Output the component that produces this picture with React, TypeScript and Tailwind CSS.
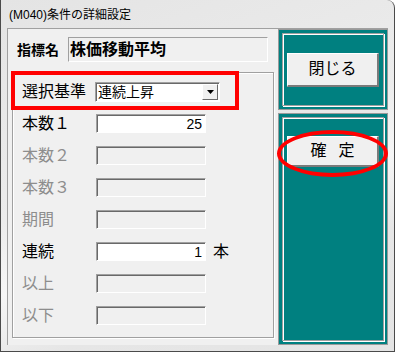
import React from "react";

const FONT = "font-['Liberation_Sans','Noto_Sans_CJK_JP',sans-serif]";

function Field({ value, enabled }: { value?: string; enabled?: boolean }) {
  return (
    <div
      className={`w-[110px] h-[19px] border-t border-l border-[#a0a0a0] border-b border-r border-b-white border-r-white shadow-[inset_1px_1px_0_#696969] flex items-center justify-end pr-[3px] text-[14px] leading-none text-black ${
        enabled ? "bg-white" : "bg-[#f0f0f0]"
      }`}
    >
      {value}
    </div>
  );
}

function Row({
  label,
  enabled,
  value,
  suffix,
}: {
  label: string;
  enabled?: boolean;
  value?: string;
  suffix?: string;
}) {
  return (
    <div className="flex items-center h-[19px]">
      <div
        className={`w-[83px] pl-[9px] text-[16px] leading-none whitespace-nowrap ${
          enabled ? "text-black" : "text-[#8d8d8d]"
        }`}
      >
        {label}
      </div>
      <Field value={value} enabled={enabled} />
      {suffix && <div className="ml-[7px] text-[16px] leading-none text-black">{suffix}</div>}
    </div>
  );
}

function Btn({ children, h }: { children: React.ReactNode; h: string }) {
  return (
    <div
      className={`w-[92px] ${h} bg-[#f0f0f0] border-t border-l border-white border-b-2 border-r-2 border-b-[#7a7a7a] border-r-[#7a7a7a] flex items-center justify-center text-[16px] leading-none text-black`}
    >
      {children}
    </div>
  );
}

export default function App() {
  return (
    <div
      className={`${FONT} relative w-[395px] h-[352px] overflow-hidden bg-[linear-gradient(160deg,#e4e4e4_0%,#ececec_45%,#f6f6f6_60%,#e6e6e6_75%,#e4e4e4_100%)] border-l border-r border-b border-[#4a4a4a] rounded-tr-[8px]`}
    >
      <div className="h-[28px] pl-[8px] pt-[1px] flex items-center text-[12px] text-black leading-none">
        (M040)条件の詳細設定
      </div>
      <div className="ml-[6px] w-[381px] h-[317px] bg-[#f0f0f0] border-t border-l border-[#a0a0a0] flex">
        {/* left column */}
        <div className="w-[270px] flex flex-col">
          <div className="mt-[8px] h-[25px] flex items-center">
            <div className="w-[60px] pl-[9px] text-[14px] font-bold leading-none text-black whitespace-nowrap">
              指標名
            </div>
            <div className="w-[200px] h-[25px] border-t border-l border-[#a0a0a0] border-b border-r border-b-white border-r-white flex items-center pl-[1px] text-[16px] font-bold leading-none text-black">
              株価移動平均
            </div>
          </div>
          <div className="ml-[4px] mt-[10px] w-[262px] h-[266px] border border-[#a0a0a0] shadow-[inset_1px_1px_0_#fff,1px_1px_0_#fff] flex flex-col pt-[9px] gap-[13px]">
            <div className="flex items-center h-[20px] mb-[-1px]">
              <div className="w-[82px] pl-[9px] text-[16px] leading-none text-black whitespace-nowrap">
                選択基準
              </div>
              <div className="w-[125px] h-[20px] bg-white border-t border-l border-[#a0a0a0] border-b border-r border-b-white border-r-white shadow-[inset_1px_1px_0_#696969] flex items-center">
                <div className="flex-1 pl-[2px] text-[14px] leading-none text-black">連続上昇</div>
                <div className="w-[16px] h-[16px] mr-[1px] bg-[#f0f0f0] border-t border-l border-white border-b border-r border-b-[#696969] border-r-[#696969] flex items-center justify-center">
                  <svg width="7" height="4" viewBox="0 0 7 4">
                    <path d="M0 0H7L3.5 4Z" fill="#000" />
                  </svg>
                </div>
              </div>
            </div>
            <Row label="本数１" enabled value="25" />
            <Row label="本数２" />
            <Row label="本数３" />
            <Row label="期間" />
            <Row label="連続" enabled value="1" suffix="本" />
            <Row label="以上" />
            <Row label="以下" />
          </div>
        </div>
        {/* right column */}
        <div className="w-[110px] flex flex-col">
          <div className="h-[81px] bg-[#008080] border border-[#9a9a9a] p-[3px]">
            <div className="h-full border border-[#a0a0a0] shadow-[inset_1px_1px_0_#fff,1px_1px_0_#fff] flex items-center justify-center">
              <Btn h="h-[34px]">閉じる</Btn>
            </div>
          </div>
          <div className="h-[3px] bg-[#e8e8e8]" />
          <div className="flex-1 bg-[#008080] border border-[#9a9a9a] p-[3px]">
            <div className="h-full border border-[#a0a0a0] shadow-[inset_1px_1px_0_#fff,1px_1px_0_#fff] flex flex-col items-center pt-[18px]">
              <Btn h="h-[31px]">
                <span className="tracking-[0.75em] pl-[0.75em]">確定</span>
              </Btn>
            </div>
          </div>
        </div>
      </div>
      {/* annotations */}
      <div className="absolute left-[10px] top-[71px] w-[228px] h-[39px] border-[4px] border-[#ff0000]" />
      <div className="absolute left-[276px] top-[130px] w-[111px] h-[47px] border-[4px] border-[#ff0000] rounded-[50%]" />
    </div>
  );
}
